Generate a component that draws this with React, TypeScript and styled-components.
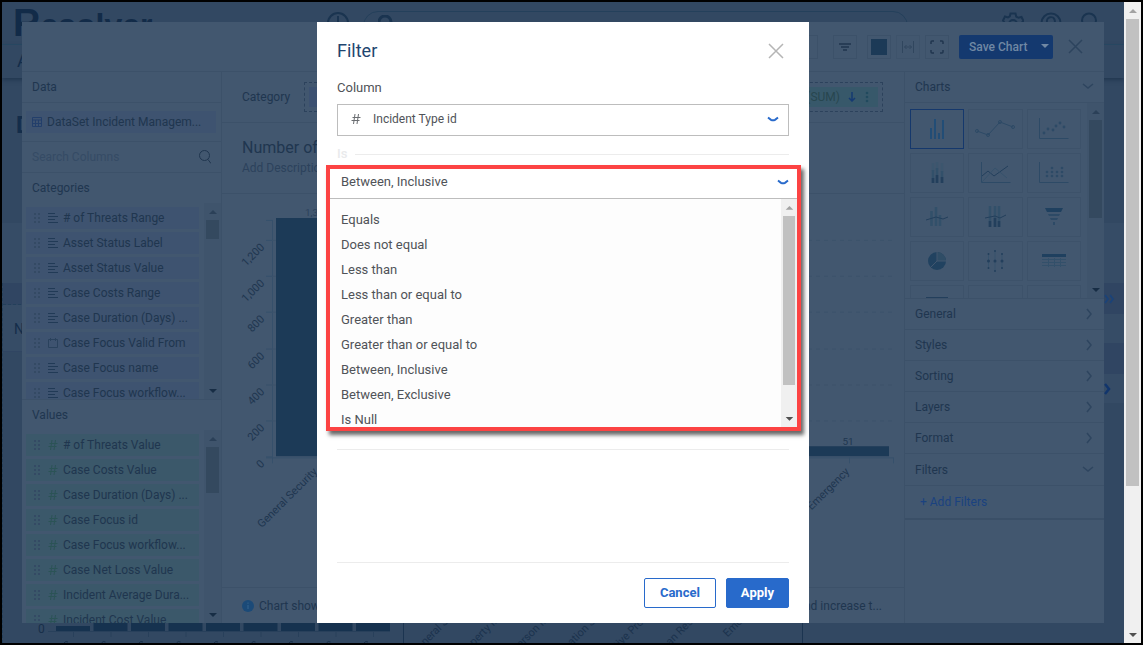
import React from "react";
import styled, { createGlobalStyle, css } from "styled-components";

const c = {
  page: "#324862",
  pageBand: "#364c66",
  pageDark: "#304562",
  panel: "#42576f",
  line: "#3c5169",
  text: "#20364f",
  textSoft: "#2c425c",
  muted: "#354b65",
  green: "#3b586a",
  blueChip: "#3e5370",
  brand: "#286acb",
  brandDim: "#14396f",
};

const GlobalStyle = createGlobalStyle`
  * { box-sizing: border-box; }
  body { margin: 0; background: #000; font-family: Roboto, "Liberation Sans", sans-serif; font-size: 12px; line-height: 16px; }
  button, input, select { font: inherit; color: inherit; margin: 0; padding: 0; border: 0; background: none; border-radius: 0; }
  ul { list-style: none; margin: 0; padding: 0; }
  h1, h2, h3, p { margin: 0; font-weight: 400; }
  svg { display: block; flex: none; }
`;

const Frame = styled.div`
  display: flex;
  height: 100vh;
  border: 2px solid #000;
`;

const Viewport = styled.div`
  position: relative;
  flex: 1;
  min-width: 0;
  overflow: hidden;
  background: ${c.page};
`;

/* ---------- scroll bars ---------- */

const Bar = styled.div<{ $w: number; $tone: "light" | "dim" }>`
  flex: none;
  width: ${(p) => p.$w}px;
  display: flex;
  flex-direction: column;
  background: ${(p) => (p.$tone === "light" ? "#f0f0f0" : "#3f546c")};
  svg { height: 17px; width: 100%; }
`;
const Track = styled.div`
  flex: 1;
  min-height: 0;
  padding: 0 2px;
`;
const Thumb = styled.div<{ $tone: "light" | "dim"; $size: number }>`
  height: ${(p) => p.$size}%;
  background: ${(p) => (p.$tone === "light" ? "#c1c1c1" : "#34495f")};
`;

function ScrollBar({ w, tone, size }: { w: number; tone: "light" | "dim"; size: number }) {
  const up = tone === "light" ? "#a3a3a3" : "#2b4058";
  const down = tone === "light" ? "#505050" : "#172d45";
  return (
    <Bar $w={w} $tone={tone} aria-hidden="true">
      <svg viewBox="0 0 17 17"><path d="M5 11h8L9 7z" fill={up} /></svg>
      <Track><Thumb $tone={tone} $size={size} /></Track>
      <svg viewBox="0 0 17 17"><path d="M5 7h8l-4 4z" fill={down} /></svg>
    </Bar>
  );
}

/* ---------- application page at the back ---------- */

const AppPage = styled.div`
  height: 100%;
  display: flex;
  flex-direction: column;
  color: #142d4a;
`;
const AppHeader = styled.header`
  height: 43px;
  flex: none;
  display: flex;
  align-items: flex-start;
  border-bottom: 1px solid #294a64;
  padding-left: 11px;
`;
const Logo = styled.div`
  width: 314px;
  font: 700 32px/42px "Liberation Sans", sans-serif;
  color: #122b48;
  span { font-size: 38px; }
`;
const SearchPill = styled.div`
  flex: none;
  width: 545px;
  height: 30px;
  margin: 9px 94px 0 14px;
  padding: 3px 14px;
  display: flex;
  justify-content: space-between;
  border: 1px solid #24405b;
  border-radius: 15px;
`;
const HeaderIcons = styled.div`
  display: flex;
  gap: 16px;
  padding-top: 10px;
`;
const AppNav = styled.nav`
  height: 33px;
  flex: none;
  padding: 7px 15px;
  font-size: 18px;
  line-height: 18px;
  box-shadow: 0 2px 4px #21364f;
`;
const AppTitle = styled.div`
  height: 145px;
  flex: none;
  padding: 36px 14px;
  font: 700 23px/24px Roboto, sans-serif;
`;
const AppBand = styled.div`
  height: 60px;
  flex: none;
  background: ${c.pageBand};
`;
const AppColumns = styled.div`
  flex: 1;
  min-height: 0;
  display: flex;
  justify-content: space-between;
`;
const ReportSide = styled.div`
  flex: 1;
  display: flex;
  flex-direction: column;
  border-left: 1px dashed #24405b;
`;
const ReportHead = styled.div`
  height: 22px;
  background: ${c.pageDark};
  border-bottom: 1px dashed #24405b;
`;
const ReportRow = styled.div`
  height: 47px;
  padding: 16px 11px;
  font-size: 14px;
  background: ${c.pageBand};
  border-bottom: 1px solid ${c.pageDark};
`;
const ReportCharts = styled.div`
  flex: 1;
  display: flex;
  align-items: flex-end;
`;
const SidePanel = styled.div`
  width: 20px;
  flex: none;
`;
const SideCell = styled.div<{ $h: number; $bg: string }>`
  height: ${(p) => p.$h}px;
  display: flex;
  align-items: center;
  background: ${(p) => p.$bg};
`;

const backLabels = ["General Security", "Property Incident", "Person Incident", "Information Security", "Executive Protection", "Human Resources", "Emergency"];

function BackPage() {
  return (
    <AppPage>
      <AppHeader>
        <Logo><span>R</span>esolver</Logo>
        <svg width="22" height="32" viewBox="0 0 22 32" fill="none" stroke="#1a3450" strokeWidth="2">
          <circle cx="11" cy="21" r="10" /><path d="M11 14v14M4 21h14" />
        </svg>
        <SearchPill>
          <svg width="20" height="24" viewBox="0 0 20 24" fill="none" stroke="#1a3450" strokeWidth="3"><circle cx="7" cy="7" r="6" /><path d="M11 12l6 7" /></svg>
          <svg width="24" height="24" viewBox="0 0 24 24" fill="none" stroke="#1a3450" strokeWidth="2"><circle cx="4" cy="11" r="3" /><circle cx="12" cy="11" r="3" /><circle cx="20" cy="11" r="3" /></svg>
        </SearchPill>
        <HeaderIcons>
          <svg width="22" height="22" viewBox="0 0 22 22" fill="none" stroke="#1a3450" strokeWidth="2"><path d="M8.500 1.500h5l.7 3 2.300 1.300 3-.8 2 4-2.300 2.200v2l2 2-2 4-7 2h-5l-5-3-2-4 2-2v-2L1 8.500l2-4 3 .9 1.800-1z" /><circle cx="11" cy="12" r="4" /></svg>
          <svg width="22" height="22" viewBox="0 0 22 22" fill="none" stroke="#1a3450" strokeWidth="2"><circle cx="11" cy="11" r="9.500" /><path d="M7 10a4 4 0 1 1 5 3l-1 2" /></svg>
          <svg width="22" height="22" viewBox="0 0 22 22" fill="none" stroke="#1a3450" strokeWidth="2"><circle cx="11" cy="8.500" r="7" /></svg>
        </HeaderIcons>
      </AppHeader>
      <AppNav>A</AppNav>
      <AppTitle>D</AppTitle>
      <AppBand />
      <AppColumns>
        <ReportSide>
          <ReportHead />
          <ReportRow>N</ReportRow>
          <ReportCharts>
            <svg width="400" height="28" viewBox="3 615 400 28">
              <text x="38" y="633" fontSize="12" fill="#182f49">0</text>
              <path d="M48 631.500h342" stroke="#28405b" />
              {[0, 1, 2, 3, 4, 5, 6, 7, 8].map((i) => (
                <g key={i}>
                  <rect x={56 + i * 37.5} y={i ? 618 : 626} width="34" height={i ? 13 : 5} fill="#16324f" />
                  <path d={`M${73.5 + i * 37.5} 632v5`} stroke="#28405b" />
                  <path d={`M${64 + i * 37.5} 643a3 3 0 0 1 4-1`} stroke="#182f49" fill="none" />
                </g>
              ))}
            </svg>
            <svg width="400" height="28" viewBox="403 615 400 28">
              <path d="M403.500 615v28M802.500 615v28" stroke="#1b3450" />
              {backLabels.map((t, i) => (
                <text key={t} transform={`translate(${472 + i * 49} 599) rotate(-45)`} textAnchor="end" fontSize="11" fill="#1b324d">{t}</text>
              ))}
            </svg>
          </ReportCharts>
        </ReportSide>
        <SidePanel>
          <SideCell $h={31} $bg={c.pageDark}>
            <svg width="12" height="12" viewBox="0 0 12 12" fill="none" stroke="#1b4378" strokeWidth="1.800"><path d="M1 2l3 4-3 4M6 2l3 4-3 4" /></svg>
          </SideCell>
          <SideCell $h={29} $bg={c.pageBand} />
          <SideCell $h={31} $bg={c.pageDark} />
          <SideCell $h={29} $bg={c.pageBand}>
            <svg width="8" height="14" viewBox="0 0 8 14" fill="none" stroke="#11356c" strokeWidth="2.500"><path d="M1 2l4 5-4 5" /></svg>
          </SideCell>
        </SidePanel>
      </AppColumns>
    </AppPage>
  );
}

/* ---------- chart editor ---------- */

const Layer = styled.div`
  position: absolute;
  inset: 0;
  padding: 20px;
  display: flex;
  justify-content: center;
`;
const Editor = styled.section`
  flex: 1;
  min-width: 0;
  display: flex;
  flex-direction: column;
  overflow: hidden;
  background: ${c.panel};
  color: ${c.text};
`;
const Toolbar = styled.div`
  height: 50px;
  flex: none;
  display: flex;
  align-items: center;
  justify-content: flex-end;
  padding-right: 21px;
  border-bottom: 1px solid ${c.line};
`;
const ToolButton = styled.button<{ $gap: number; $faint?: boolean }>`
  width: 24px;
  height: 24px;
  margin-right: ${(p) => p.$gap}px;
  display: flex;
  align-items: center;
  justify-content: center;
  border: 1px solid ${c.line};
  opacity: ${(p) => (p.$faint ? 0.5 : 1)};
`;
const SaveButton = styled.button`
  width: 94px;
  height: 24px;
  margin-right: 15px;
  padding: 0 4px 0 10px;
  display: flex;
  align-items: center;
  justify-content: space-between;
  border-radius: 2px;
  background: ${c.brandDim};
  color: #7088a4;
  font-weight: 500;
`;
const PlainButton = styled.button`
  display: flex;
  align-items: center;
`;
const EditorBody = styled.div`
  flex: 1;
  min-height: 0;
  display: flex;
`;
const Side = styled.aside<{ $right?: boolean }>`
  width: 200px;
  flex: none;
  display: flex;
  flex-direction: column;
  ${(p) => (p.$right ? css`border-left: 1px solid ${c.line};` : css`border-right: 1px solid ${c.line};`)}
`;
const SideRow = styled.div<{ $h?: number; $plain?: boolean }>`
  height: ${(p) => p.$h ?? 31}px;
  flex: none;
  display: flex;
  align-items: center;
  justify-content: space-between;
  padding: 0 10px;
  border-bottom: ${(p) => (p.$plain ? "0" : `1px solid ${c.line}`)};
`;
const DataSetChip = styled.button`
  flex: 1;
  height: 22px;
  margin: 0 -5px 0 -6px;
  padding: 0 6px;
  display: flex;
  align-items: center;
  gap: 5px;
  white-space: nowrap;
  background: ${c.blueChip};
`;
const SearchInput = styled.input`
  width: 150px;
  outline: 0;
  &::placeholder { color: ${c.muted}; opacity: 1; }
`;
const ListArea = styled.div<{ $grow?: boolean }>`
  display: flex;
  min-height: 0;
  overflow: hidden;
  ${(p) => (p.$grow ? css`flex: 1;` : css`height: 197px; flex: none; border-bottom: 1px solid ${c.line};`)}
`;
const FieldList = styled.ul`
  flex: 1;
  min-width: 0;
  padding: 4px 5px 0 4px;
  overflow: hidden;
`;
const FieldItem = styled.li<{ $measure?: boolean }>`
  height: 22px;
  margin-bottom: 3px;
  padding-left: 8px;
  display: flex;
  align-items: center;
  background: ${(p) => (p.$measure ? c.green : c.blueChip)};
  white-space: nowrap;
  span { margin-left: 5px; }
`;

const categories: [string, boolean?][] = [
  ["# of Threats Range"], ["Asset Status Label"], ["Asset Status Value"], ["Case Costs Range"],
  ["Case Duration (Days) ..."], ["Case Focus Valid From", true], ["Case Focus name"], ["Case Focus workflow..."],
];
const values = ["# of Threats Value", "Case Costs Value", "Case Duration (Days) ...", "Case Focus id", "Case Focus workflow...", "Case Net Loss Value", "Incident Average Dura...", "Incident Cost Value"];

function Grip() {
  return (
    <svg width="14" height="14" viewBox="0 0 14 14" fill="#344a64">
      {[1, 5, 9].map((y) => [0, 4].map((x) => <rect key={`${x}${y}`} x={x} y={y + 1} width="2" height="2" />))}
    </svg>
  );
}
function HashIcon({ color }: { color: string }) {
  return (
    <svg width="10" height="12" viewBox="0 0 10 12" stroke={color} fill="none"><path d="M4 1L2.500 11M7.500 1L6 11M1.500 4.500h8M.5 7.500h8" /></svg>
  );
}
function TextIcon() {
  return <svg width="10" height="12" viewBox="0 0 10 12" stroke="#213a56"><path d="M0 1.500h7M0 4.500h10M0 7.500h7M0 10.500h10" /></svg>;
}
function DateIcon() {
  return <svg width="10" height="12" viewBox="0 0 10 12" stroke="#2a425d" fill="none"><path d="M.5 2.500h9v8h-9zM2.500 1v3M7.500 1v3" /></svg>;
}
function Chevron({ open }: { open?: boolean }) {
  return (
    <svg width="12" height="12" viewBox="0 0 12 12" fill="none" stroke="#2e455f" strokeWidth="1.500">
      <path d={open ? "M1 3l5 4 5-4" : "M5 1l4 5-4 5"} />
    </svg>
  );
}

const Center = styled.div`
  flex: 1;
  min-width: 0;
  display: flex;
  flex-direction: column;
`;
const AxisRow = styled.div`
  height: 51px;
  flex: none;
  display: flex;
  align-items: center;
  gap: 14px;
  padding: 0 21px 0 20px;
  border-bottom: 1px solid ${c.line};
`;
const DropZone = styled.div`
  flex: 1;
  height: 30px;
  display: flex;
  justify-content: space-between;
  padding: 4px;
  border: 1px dashed #2c425c;
`;
const Pill = styled.div<{ $measure?: boolean }>`
  height: 20px;
  min-width: 60px;
  display: flex;
  align-items: center;
  padding: 0 8px;
  color: #27464f;
  background: ${(p) => (p.$measure ? "#37586a" : "#3c5171")};
  svg { margin-left: 8px; }
`;
const ChartHeading = styled.div`
  height: 71px;
  flex: none;
  padding: 15px 20px;
  border-bottom: 1px solid ${c.line};
  h2 { font-size: 16px; line-height: 20px; }
  p { line-height: 20px; color: ${c.textSoft}; }
`;
const Plot = styled.div`
  flex: 1;
  min-height: 0;
  svg { width: 100%; height: 100%; }
`;
const Footnote = styled.div`
  height: 36px;
  flex: none;
  display: flex;
  align-items: center;
  gap: 5px;
  padding: 0 22px 0 20px;
  border-top: 1px solid ${c.line};
  p { flex: 1; min-width: 0; display: flex; justify-content: space-between; }
`;

const yTicks: [string, number][] = [["1,200", 241], ["1,000", 277], ["800", 313], ["600", 350], ["400", 386], ["200", 422], ["0", 458]];

function BarChart() {
  return (
    <Plot>
      <svg viewBox="222 194 682 394" preserveAspectRatio="none" role="img" aria-label="Number of incidents">
        <path d="M272.500 220v244M266 220.500h6M266 458.500h627M317.500 458v6M849.500 458v6M893.500 458v6" stroke="#36506b" fill="none" />
        {yTicks.map(([t, y]) => (
          <g key={t}>
            <path d={`M266 ${y - 0.5}h6`} stroke="#36506b" />
            {y < 450 && <path d={`M272 ${y - 0.5}h621`} stroke="#3c526a" strokeDasharray="4 4" />}
            <text transform={`translate(265 ${y + 7}) rotate(-45)`} textAnchor="end" fontSize="11" fill={c.text}>{t}</text>
          </g>
        ))}
        <path d="M276 218h82v239h-82zM807 447h82v10h-82z" fill="#1c3a57" />
        <text x="305" y="216" fontSize="10" fill={c.textSoft}>1,301</text>
        <text x="848" y="446" fontSize="10" textAnchor="middle" fill={c.text}>51</text>
        <text transform="translate(318 473) rotate(-45)" textAnchor="end" fontSize="11" fill={c.text}>General Security</text>
        <text transform="translate(850 473) rotate(-45)" textAnchor="end" fontSize="11" fill={c.text}>Emergency</text>
      </svg>
    </Plot>
  );
}

const Gallery = styled.div`
  height: 196px;
  flex: none;
  display: flex;
  overflow: hidden;
  border-bottom: 1px solid ${c.line};
`;
const GalleryGrid = styled.div`
  flex: 1;
  display: grid;
  grid-template-columns: repeat(3, 1fr);
  grid-auto-rows: 40px;
  gap: 4px;
  padding: 6px 6px 0 5px;
`;
const ChartCard = styled.button<{ $on?: boolean }>`
  display: flex;
  align-items: center;
  justify-content: center;
  border: 1px solid ${(p) => (p.$on ? "#15386c" : "#3d526a")};
`;
const AddFilters = styled.button`
  height: 34px;
  flex: none;
  padding: 0 15px;
  text-align: left;
  color: #1a4280;
  border-bottom: 2px solid #3a4f67;
`;

const ink = "#233f5c";
const mid = "#2d4a66";
const drawings: [string, React.ReactNode][] = [
  ["Column", <g stroke="#224d76" strokeWidth="2"><path d="M11 15v11M15 6v20M19 20v6M23 7v19" /></g>],
  ["Line", <g stroke={mid} fill="none"><path d="M-1 18l11 4L22 9l13 5" /><circle cx="-1" cy="18" r="1.500" /><circle cx="10" cy="22" r="1.500" /><circle cx="22" cy="9" r="1.500" /><circle cx="35" cy="14" r="1.500" /></g>],
  ["Scatter", <g stroke={mid} fill="none"><path d="M2.500 5v20.500h29" /><g stroke="none" fill={mid}><circle cx="7" cy="20" r="1.400" /><circle cx="11" cy="16" r="1.400" /><circle cx="16" cy="17" r="1.400" /><circle cx="19" cy="13" r="1.400" /><circle cx="23" cy="10" r="1.400" /><circle cx="27" cy="14" r="1.400" /></g></g>],
  ["Stacked column", <g strokeWidth="2.500" fill="none"><path d="M13 6v8M17 5v8M22 6v9" stroke="#3c566e" /><path d="M13 13v13M17 11v15M22 14v12" stroke="#32506a" /><path d="M13 21v5M17 18v8M22 20v6" stroke={ink} /></g>],
  ["Area", <g stroke={mid} fill="none"><path d="M3.500 5v20.500h29" /><path d="M4 19l6-5 6 5 14-10" stroke={ink} /><path d="M4 25l13-14 12 10" stroke="#36526c" /></g>],
  ["Dot", <g stroke={mid} fill="none"><path d="M2.500 5v20.500h29" /><g stroke="none" fill={mid}>{[11, 15, 19].map((y, r) => [10, 15, 20, 25].map((x) => (r || x === 15 || x === 25) && <circle key={`${x}-${y}`} cx={x} cy={y} r="1.300" />))}</g></g>],
  ["Column and line", <g stroke="#32506a" fill="none"><path d="M11.500 10v15M16 6v19M20 14v11" strokeWidth="2.500" /><path d="M6 19l10-3 7 2 5-2" stroke={ink} /></g>],
  ["Stacked column and line", <g stroke="#32506a" fill="none"><path d="M12 5v21M17 5v21M21 5v21" strokeWidth="2.500" /><path d="M12 20v6M17 17v9M21 20v6" strokeWidth="2.500" stroke={ink} /><path d="M7 17l10-2 5 2 6-3" stroke={ink} /></g>],
  ["Funnel", <g fill="#1f405f"><path d="M8 7h18l-2 4H10z" /><path d="M11 13h12l-1 2H12zM13 17h8l-1 2h-6zM16 21h2v3h-2z" fill={mid} /></g>],
  ["Pie", <g><circle cx="17" cy="16" r="9" fill="#214260" /><path d="M17 16V7a9 9 0 0 1 9 9z" fill="#2f4d66" /><path d="M17 7v9h9M17 16l-7 7" stroke={c.panel} fill="none" /></g>],
  ["Box", <g stroke="#36526c" fill={ink}><path d="M10.500 8v16M17 6v20M24 8v16" /><g stroke="none"><circle cx="10.500" cy="16" r="1.500" /><circle cx="17" cy="16" r="1.500" /><circle cx="24" cy="16" r="1.500" /><circle cx="10.500" cy="9" r="1" /><circle cx="17" cy="6" r="1" /><circle cx="24" cy="9" r="1" /><circle cx="10.500" cy="23" r="1" /><circle cx="17" cy="26" r="1" /><circle cx="24" cy="23" r="1" /></g></g>],
  ["Table", <g stroke="#33506a" fill="none"><path d="M5 9h24v3H5z" fill="#1f405f" stroke="none" /><path d="M5 14.500h24M5 17.500h24M5 20.500h24M11.500 13v9M17.500 13v9M23.500 13v9" /></g>],
  ["Card", <path d="M6 8.500h22" stroke={ink} />],
  ["Gauge", null],
  ["Map", null],
];

/* ---------- filter dialog ---------- */

const Dialog = styled.section`
  width: 492px;
  display: flex;
  flex-direction: column;
  padding: 0 20px;
  background: #fff;
  color: #505358;
  font-size: 13px;
`;
const DialogHead = styled.div`
  height: 58px;
  flex: none;
  display: flex;
  align-items: center;
  justify-content: space-between;
  padding-right: 5px;
  h1 { font-size: 18px; line-height: 24px; color: #1f4570; }
`;
const FieldLabel = styled.label`
  display: block;
  margin-bottom: 8px;
`;
const SelectBox = styled.div<{ $h: number; $framed?: boolean }>`
  height: ${(p) => p.$h}px;
  flex: none;
  display: flex;
  align-items: center;
  ${(p) =>
    p.$framed
      ? css`padding: 0 9px 2px 13px; border: 1px solid #bdbdbd; font-size: 12px;`
      : css`padding: 0 8px 4px 11px; border-bottom: 1px solid #bdbdbd;`}
  select { flex: 1; appearance: none; outline: 0; }
  select + svg { margin-left: 8px; }
`;
const HashGap = styled.span`
  width: 22px;
`;
const Legend = styled.div`
  margin: 10px 0 3px;
  height: 16px;
  flex: none;
  display: flex;
  align-items: center;
  gap: 8px;
  color: #e9eaec;
  font-weight: 500;
  &::after { content: ""; flex: 1; height: 1px; background: #ececec; }
`;
const OpenSelect = styled.div`
  height: 266px;
  flex: none;
  margin: 0 -12px 18px -11px;
  display: flex;
  flex-direction: column;
  border: 4px solid #fc4343;
  box-shadow: 3px 4px 4px rgba(0, 0, 0, 0.6);
`;
const OptionArea = styled.div`
  flex: 1;
  min-height: 0;
  display: flex;
  overflow: hidden;
  background: #fdfdfd;
`;
const OptionList = styled.ul`
  flex: 1;
  padding-top: 8px;
`;
const OptionItem = styled.li`
  height: 25px;
  padding: 5px 11px 4px;
`;
const Rule = styled.div`
  height: 1px;
  flex: none;
  background: #ececec;
`;
const DialogFoot = styled.div`
  margin-top: auto;
  flex: none;
  display: flex;
  justify-content: flex-end;
  gap: 10px;
  padding: 15px 0;
  border-top: 1px solid #ececec;
`;
const ActionButton = styled.button<{ $primary?: boolean }>`
  height: 30px;
  padding: 0 ${(p) => (p.$primary ? 14 : 15)}px;
  border: 1px solid ${c.brand};
  border-radius: 2px;
  font-weight: 700;
  background: ${(p) => (p.$primary ? c.brand : "#fff")};
  color: ${(p) => (p.$primary ? "#fff" : c.brand)};
`;

function BlueChevron() {
  return <svg width="12" height="8" viewBox="0 0 12 8" fill="none" stroke={c.brand} strokeWidth="2"><path d="M1 2.500l3 2.300q2 1 4 0l3-2.300" /></svg>;
}

const operators = ["Equals", "Does not equal", "Less than", "Less than or equal to", "Greater than", "Greater than or equal to", "Between, Inclusive", "Between, Exclusive", "Is Null"];

export default function App() {
  return (
    <>
      <GlobalStyle />
      <Frame>
        <Viewport>
          <BackPage />
          <Layer>
            <Editor>
              <Toolbar>
                <ToolButton $gap={15} aria-label="More"><svg width="12" height="12" viewBox="0 0 12 12" fill={c.text}><circle cx="3" cy="6" r="1.500" /></svg></ToolButton>
                <ToolButton $gap={10} aria-label="Sort">
                  <svg width="12" height="10" viewBox="0 0 12 10" stroke={c.text} strokeWidth="1.300"><path d="M0 2h12M2 5h8M4 8h4" /></svg>
                </ToolButton>
                <ToolButton $gap={5} aria-label="Colour"><svg width="16" height="16"><rect width="16" height="16" fill="#1c3a57" /></svg></ToolButton>
                <ToolButton $gap={5} $faint aria-label="Fit width">
                  <svg width="12" height="12" viewBox="0 0 12 12" stroke={c.text} fill="none"><path d="M.5 0v12M11.500 0v12M2.500 6h7M4.500 4l-2 2 2 2M7.500 4l2 2-2 2" /></svg>
                </ToolButton>
                <ToolButton $gap={10} aria-label="Full screen">
                  <svg width="14" height="14" viewBox="0 0 14 14" stroke={c.text} strokeWidth="1.500" fill="none"><path d="M1 4V2q0-1 1-1h2M10 1h2q1 0 1 1v2M13 10v2q0 1-1 1h-2M4 13H2q-1 0-1-1v-2" /></svg>
                </ToolButton>
                <SaveButton>Save Chart<svg width="8" height="5" viewBox="0 0 8 5"><path d="M0 0h8L4 4z" fill="#7088a4" /></svg></SaveButton>
                <PlainButton aria-label="Close editor"><svg width="15" height="15" viewBox="0 0 15 15" stroke="#2d445e" strokeWidth="1.500"><path d="M1 1l13 13M14 1L1 14" /></svg></PlainButton>
              </Toolbar>
              <EditorBody>
                <Side>
                  <SideRow>Data</SideRow>
                  <SideRow $h={39}>
                    <DataSetChip>
                      <svg width="10" height="10" viewBox="0 0 10 10" stroke="#233f6b" fill="none"><path d="M.5.5h9v9h-9zM.5 3h9M.5 6.500h9M3.500 3v6M6.500 3v6" /></svg>
                      DataSet Incident Managem...
                    </DataSetChip>
                  </SideRow>
                  <SideRow>
                    <SearchInput placeholder="Search Columns" aria-label="Search Columns" />
                    <svg width="12" height="14" viewBox="0 0 12 14" stroke={c.text} fill="none"><circle cx="5.500" cy="5.500" r="5" /><path d="M9 9.500l3 4" /></svg>
                  </SideRow>
                  <SideRow $plain $h={30}>Categories</SideRow>
                  <ListArea>
                    <FieldList>
                      {categories.map(([name, date]) => (
                        <FieldItem key={name}><Grip />{date ? <DateIcon /> : <TextIcon />}<span>{name}</span></FieldItem>
                      ))}
                    </FieldList>
                    <ScrollBar w={17} tone="dim" size={12} />
                  </ListArea>
                  <SideRow $plain $h={30}>Values</SideRow>
                  <ListArea $grow>
                    <FieldList>
                      {values.map((name) => (
                        <FieldItem key={name} $measure><Grip /><HashIcon color="#2b5356" /><span>{name}</span></FieldItem>
                      ))}
                    </FieldList>
                    <ScrollBar w={17} tone="dim" size={29} />
                  </ListArea>
                </Side>
                <Center>
                  <AxisRow>
                    Category
                    <DropZone>
                      <Pill />
                      <Pill $measure>
                        (SUM)
                        <svg width="8" height="10" viewBox="0 0 8 10" stroke="#153a72" strokeWidth="1.500" fill="none"><path d="M4 0v8M1 6l3 3 3-3" /></svg>
                        <svg width="6" height="12" viewBox="0 0 6 12" fill="#214a5e"><circle cx="3" cy="2" r="1.300" /><circle cx="3" cy="6" r="1.300" /><circle cx="3" cy="10" r="1.300" /></svg>
                      </Pill>
                    </DropZone>
                  </AxisRow>
                  <ChartHeading>
                    <h2>Number of</h2>
                    <p>Add Description</p>
                  </ChartHeading>
                  <BarChart />
                  <Footnote>
                    <svg width="12" height="12" viewBox="0 0 12 12"><circle cx="6" cy="6" r="6" fill="#1b4a78" /><path d="M6 5v4M6 2.500v1.200" stroke="#2e5c86" strokeWidth="1.500" /></svg>
                    <p><span>Chart shows</span><span>and increase t...</span></p>
                  </Footnote>
                </Center>
                <Side $right>
                  <SideRow>Charts<Chevron open /></SideRow>
                  <Gallery>
                    <GalleryGrid>
                      {drawings.map(([name, art], i) => (
                        <ChartCard key={name} $on={i === 0} aria-label={name}>
                          <svg width="34" height="32" viewBox="0 0 34 32" overflow="visible">{art}</svg>
                        </ChartCard>
                      ))}
                    </GalleryGrid>
                    <ScrollBar w={17} tone="dim" size={61} />
                  </Gallery>
                  {["General", "Styles", "Sorting", "Layers", "Format"].map((s) => (
                    <SideRow key={s}>{s}<Chevron /></SideRow>
                  ))}
                  <SideRow $h={32}>Filters<Chevron open /></SideRow>
                  <AddFilters>+ Add Filters</AddFilters>
                </Side>
              </EditorBody>
            </Editor>
          </Layer>
          <Layer>
            <Dialog role="dialog" aria-labelledby="filter-title">
              <DialogHead>
                <h1 id="filter-title">Filter</h1>
                <PlainButton aria-label="Close"><svg width="16" height="16" viewBox="0 0 16 16" stroke="#b5b5b5" strokeWidth="1.500"><path d="M1 1l14 14M15 1L1 15" /></svg></PlainButton>
              </DialogHead>
              <FieldLabel htmlFor="column">Column</FieldLabel>
              <SelectBox $h={32} $framed>
                <HashGap><HashIcon color="#6b6e72" /></HashGap>
                <select id="column"><option>Incident Type id</option></select>
                <BlueChevron />
              </SelectBox>
              <Legend>Is</Legend>
              <OpenSelect>
                <SelectBox $h={30}>
                  <select aria-label="Is" defaultValue="Between, Inclusive">
                    {operators.map((o) => <option key={o}>{o}</option>)}
                  </select>
                  <BlueChevron />
                </SelectBox>
                <OptionArea>
                  <OptionList role="listbox" aria-label="Operators">
                    {operators.map((o) => <OptionItem key={o} role="option">{o}</OptionItem>)}
                  </OptionList>
                  <ScrollBar w={16} tone="light" size={87} />
                </OptionArea>
              </OpenSelect>
              <Rule />
              <DialogFoot>
                <ActionButton>Cancel</ActionButton>
                <ActionButton $primary>Apply</ActionButton>
              </DialogFoot>
            </Dialog>
          </Layer>
        </Viewport>
        <ScrollBar w={17} tone="light" size={77} />
      </Frame>
    </>
  );
}
